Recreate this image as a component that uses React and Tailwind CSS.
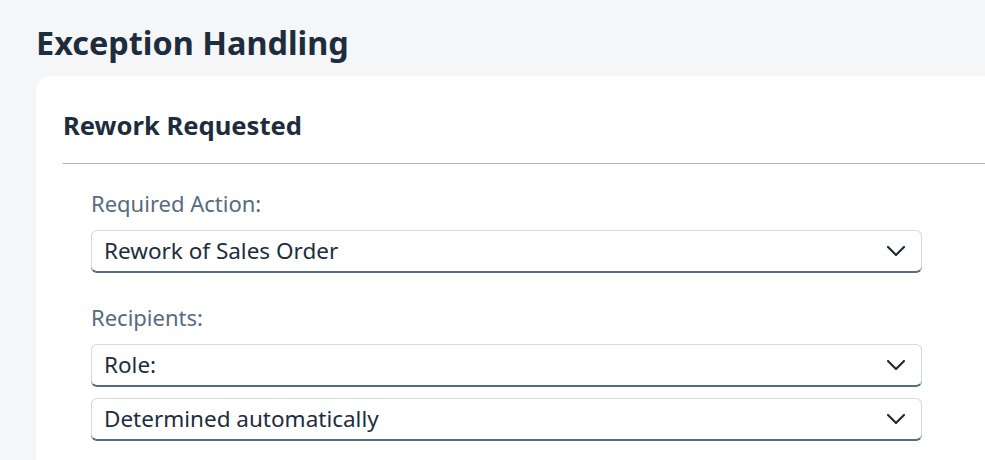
import { ChevronDown } from "lucide-react";

const Select = ({ value }) => (
  <div className="flex h-[42px] w-[831px] items-center justify-between rounded-md border border-[#d5dadd] border-b-[#556b82] bg-white pl-3 pr-[9px] shadow-[0_1px_0_#556b82]">
    <span className="text-[22.5px] text-[#1d2d3e]">{value}</span>
    <ChevronDown className="h-8 w-8 text-[#1d2d3e]" strokeWidth={1.6} />
  </div>
);

export default function App() {
  return (
    <div
      className="h-screen bg-[#f5f6f7] pl-9 pt-[22px] overflow-hidden"
      style={{ fontFamily: '"Noto Sans", sans-serif' }}
    >
      <h1 className="text-[32.4px] font-bold leading-10 text-[#1d2d3e]">
        Exception Handling
      </h1>

      <div className="mt-[14px] rounded-l-2xl bg-white pb-24 pl-[27px]">
        <div className="pt-[34px] pb-[21px]">
          <h2 className="text-[25.6px] font-bold leading-8 text-[#1d2d3e]">
            Rework Requested
          </h2>
        </div>
        <div className="h-px bg-[#a9b4be]" />

        <div className="pl-7 pt-[25px]">
          <div className="text-[22px] leading-7 text-[#556b82]">Required Action:</div>
          <div className="mt-[13px]">
            <Select value="Rework of Sales Order" />
          </div>

          <div className="mt-[31px] text-[22px] leading-7 text-[#556b82]">Recipients:</div>
          <div className="mt-[13px] flex flex-col gap-3">
            <Select value="Role:" />
            <Select value="Determined automatically" />
          </div>
        </div>
      </div>
    </div>
  );
}
